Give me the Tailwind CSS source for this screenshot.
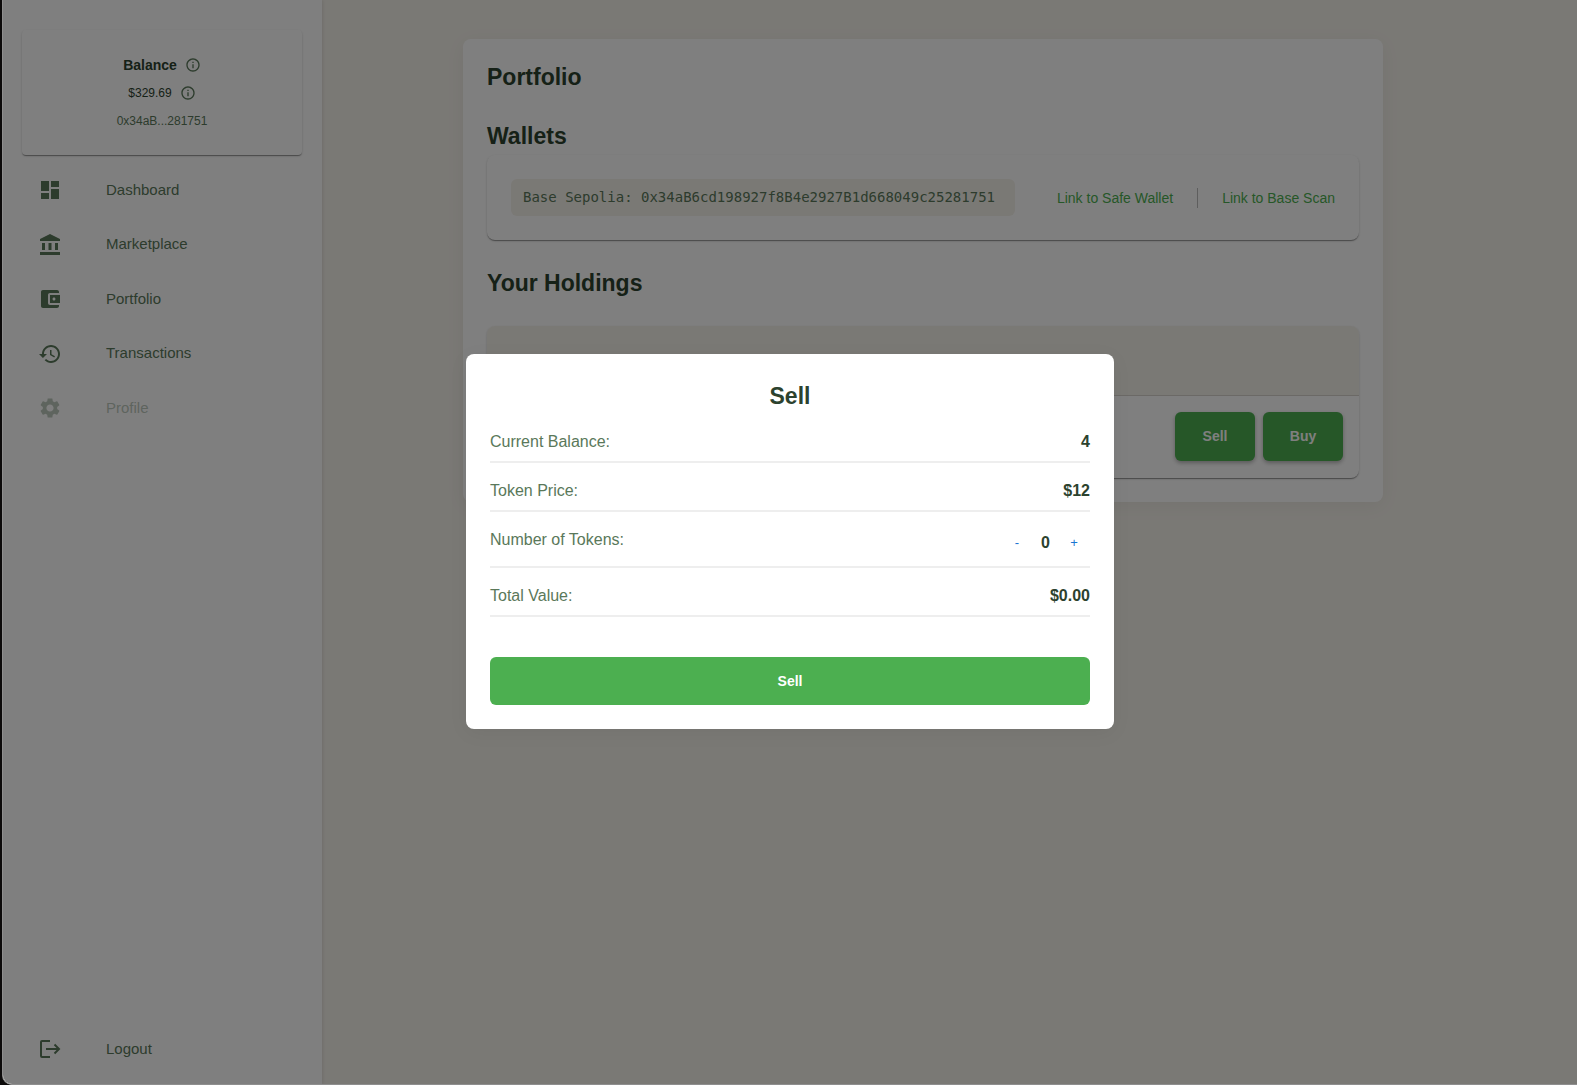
<!DOCTYPE html>
<html lang="en">
<head>
<meta charset="utf-8">
<title>Portfolio</title>
<script src="https://cdn.jsdelivr.net/npm/@tailwindcss/browser@4"></script>
</head>
<body class="min-h-screen bg-[#0c0a0a] pl-[2px] font-['Liberation_Sans',sans-serif] text-[#5a785a]">
<div class="relative flex min-h-screen overflow-hidden rounded-bl-[10px] border-b border-l border-[#8f8f8f] bg-[#f5f2eb]">

  <aside class="flex w-[319px] shrink-0 flex-col bg-white pt-[30px] shadow-[0_0_4px_rgba(0,0,0,0.15)]">
    <section class="mr-5 ml-[19px] flex h-[125px] flex-col items-center gap-2 rounded-[4px] pt-[25px] shadow-[0_2px_1px_-1px_rgba(0,0,0,0.2),0_1px_1px_rgba(0,0,0,0.2),0_1px_3px_rgba(0,0,0,0.12)]">
      <h2 class="flex h-5 items-center gap-2 text-sm font-bold text-[#2c422e]">Balance
        <svg class="size-4 fill-[#5a785a]" viewBox="0 0 24 24"><path d="M11 7h2v2h-2zm0 4h2v6h-2zm1-9C6.480 2 2 6.480 2 12s4.480 10 10 10 10-4.480 10-10S17.520 2 12 2m0 18c-4.410 0-8-3.590-8-8s3.590-8 8-8 8 3.590 8 8-3.590 8-8 8"/></svg>
      </h2>
      <p class="flex h-5 items-center gap-2 text-xs text-[#2c422e]">$329.69
        <svg class="size-4 fill-[#5a785a]" viewBox="0 0 24 24"><path d="M11 7h2v2h-2zm0 4h2v6h-2zm1-9C6.480 2 2 6.480 2 12s4.480 10 10 10 10-4.480 10-10S17.520 2 12 2m0 18c-4.410 0-8-3.590-8-8s3.590-8 8-8 8 3.590 8 8-3.590 8-8 8"/></svg>
      </p>
      <p class="h-5 text-xs leading-5">0x34aB...281751</p>
    </section>
    <nav class="flex grow flex-col pt-2 pb-2 text-[15px]">
      <a href="#" class="flex h-[54px] items-center gap-11 pl-[35px]"><svg class="size-6 fill-[#5a785a]" viewBox="0 0 24 24"><path d="M3 13h8V3H3zm0 8h8v-6H3zm10 0h8V11h-8zm0-18v6h8V3z"/></svg>Dashboard</a>
      <a href="#" class="flex h-[55px] items-center gap-11 pl-[35px]"><svg class="size-6 fill-[#5a785a]" viewBox="0 0 24 24"><path d="M4 10h3v7H4zm6.500 0h3v7h-3zM2 19h20v3H2zm15-9h3v7h-3zm-5-9L2 6v2h20V6z"/></svg>Marketplace</a>
      <a href="#" class="flex h-[54px] items-center gap-11 pl-[35px]"><svg class="size-6 fill-[#5a785a]" viewBox="0 0 24 24"><path d="M21 18v1c0 1.100-.9 2-2 2H5c-1.110 0-2-.9-2-2V5c0-1.100.890-2 2-2h14c1.100 0 2 .9 2 2v1h-9c-1.110 0-2 .9-2 2v8c0 1.100.890 2 2 2zm-9-2h10V8H12zm4-2.500c-.830 0-1.500-.670-1.500-1.500s.670-1.500 1.500-1.500 1.500.670 1.500 1.500-.670 1.500-1.500 1.500"/></svg>Portfolio</a>
      <a href="#" class="flex h-[55px] items-center gap-11 pl-[35px]"><svg class="size-6 fill-[#5a785a]" viewBox="0 0 24 24"><path d="M13 3c-4.970 0-9 4.030-9 9H1l3.890 3.890.070.140L9 12H6c0-3.870 3.130-7 7-7s7 3.130 7 7-3.130 7-7 7c-1.930 0-3.680-.790-4.940-2.060l-1.420 1.420C8.270 19.990 10.510 21 13 21c4.970 0 9-4.030 9-9s-4.030-9-9-9m-1 5v5l4.280 2.540.720-1.210-3.500-2.080V8z"/></svg>Transactions</a>
      <a href="#" aria-disabled="true" class="flex h-[54px] items-center gap-11 pl-[35px] opacity-40"><svg class="size-6 fill-[#5a785a]" viewBox="0 0 24 24"><path d="M19.140 12.940c.040-.3.060-.610.060-.940 0-.320-.020-.640-.070-.940l2.030-1.580c.180-.140.230-.410.120-.610l-1.920-3.320c-.120-.220-.370-.290-.590-.220l-2.390.960c-.5-.380-1.030-.7-1.620-.940l-.360-2.540c-.040-.240-.240-.410-.480-.410h-3.840c-.240 0-.430.170-.470.410l-.360 2.540c-.590.240-1.130.570-1.620.940l-2.390-.960c-.220-.080-.470 0-.590.220L2.740 8.870c-.120.210-.080.470.120.610l2.030 1.580c-.050.3-.090.630-.090.940s.020.640.070.940l-2.030 1.580c-.180.140-.230.410-.120.610l1.920 3.320c.120.220.370.290.590.220l2.390-.960c.5.380 1.030.7 1.620.940l.360 2.540c.050.240.240.410.480.410h3.840c.240 0 .440-.170.470-.410l.360-2.540c.590-.240 1.130-.560 1.620-.940l2.390.960c.220.080.470 0 .590-.220l1.920-3.320c.120-.220.070-.470-.120-.610zM12 15.600c-1.980 0-3.600-1.620-3.600-3.600s1.620-3.600 3.600-3.600 3.600 1.620 3.600 3.600-1.620 3.600-3.600 3.600"/></svg>Profile</a>
      <a href="#" class="mt-auto flex h-[54px] items-center gap-11 pl-[35px]"><svg class="size-6 fill-none stroke-[#5a785a] stroke-2" viewBox="0 0 24 24"><path d="M12 4H4q-1 0-1 1v14q0 1 1 1h8M8 12h13M16.500 7.500 21 12l-4.500 4.500"/></svg>Logout</a>
    </nav>
  </aside>

  <main class="min-w-0 grow pt-[39px] pr-[194px] pb-10 pl-[141px]">
    <div class="rounded-lg bg-white p-6 shadow-[0_4px_20px_rgba(0,0,0,0.05)]">
      <h1 class="text-[23px] leading-7 font-bold text-[#2c422e]">Portfolio</h1>
      <h2 class="mt-[31px] text-[23px] leading-7 font-bold text-[#2c422e]">Wallets</h2>
      <div class="mt-[5px] flex h-[85px] items-center rounded-lg px-6 text-sm shadow-[0_2px_1px_-1px_rgba(0,0,0,0.2),0_1px_1px_rgba(0,0,0,0.2),0_1px_3px_rgba(0,0,0,0.12)]">
        <code class="grow rounded-md bg-[#f5f2eb] px-3 py-2 font-['DejaVu_Sans_Mono',monospace] text-sm leading-[21px] whitespace-nowrap">Base Sepolia: 0x34aB6cd198927f8B4e2927B1d668049c25281751</code>
        <div class="ml-[42px] flex shrink-0 items-center gap-6 text-[#4caf50]">
          <a href="#">Link to Safe Wallet</a>
          <span class="h-5 w-px bg-[#bdbdbd]"></span>
          <a href="#">Link to Base Scan</a>
        </div>
      </div>
      <h2 class="mt-[29px] text-[23px] leading-7 font-bold text-[#2c422e]">Your Holdings</h2>
      <div class="mt-[29px] overflow-hidden rounded-lg shadow-[0_2px_1px_-1px_rgba(0,0,0,0.2),0_1px_1px_rgba(0,0,0,0.2),0_1px_3px_rgba(0,0,0,0.12)]">
        <table class="w-full border-collapse">
          <thead><tr class="h-[69px] border-b border-[#d6d3cc] bg-[#f5f2eb]"><th></th><th></th></tr></thead>
          <tbody><tr>
            <td></td>
            <td class="px-4 pt-4 pb-[17px]">
              <div class="flex justify-end gap-2">
                <button type="button" class="h-[49px] w-20 rounded-md bg-[#4caf50] text-sm font-bold text-white shadow-[0_2px_4px_rgba(0,0,0,0.3)]">Sell</button>
                <button type="button" class="h-[49px] w-20 rounded-md bg-[#4caf50] text-sm font-bold text-white shadow-[0_2px_4px_rgba(0,0,0,0.3)]">Buy</button>
              </div>
            </td>
          </tr></tbody>
        </table>
      </div>
    </div>
  </main>

  <!-- Modal overlay -->
  <div class="absolute inset-0 flex items-center justify-center bg-black/50 pb-px">
    <div role="dialog" aria-labelledby="sell-title" class="w-full max-w-[648px] rounded-lg bg-white p-6 shadow-[0_4px_20px_rgba(0,0,0,0.05)]">
      <h2 id="sell-title" class="h-9 text-center text-[23px] leading-9 font-bold text-[#2c422e]">Sell</h2>
      <dl class="text-base">
        <div class="flex h-[49px] justify-between border-b-2 border-[#eeeeee] pt-4"><dt>Current Balance:</dt><dd class="font-bold text-[#2c422e]">4</dd></div>
        <div class="flex h-[49px] justify-between border-b-2 border-[#eeeeee] pt-4"><dt>Token Price:</dt><dd class="font-bold text-[#2c422e]">$12</dd></div>
        <div class="flex h-14 justify-between border-b-2 border-[#eeeeee] pt-4"><dt>Number of Tokens:</dt>
          <dd class="flex h-[30px] items-center font-bold text-[#2c422e]">
            <button type="button" aria-label="Decrease" class="w-8 text-[13px] font-normal text-[#1976d2]">-</button>
            <span class="w-[25px] text-center">0</span>
            <button type="button" aria-label="Increase" class="w-8 text-[13px] font-normal text-[#1976d2]">+</button>
          </dd>
        </div>
        <div class="flex h-[49px] justify-between border-b-2 border-[#eeeeee] pt-4"><dt>Total Value:</dt><dd class="font-bold text-[#2c422e]">$0.00</dd></div>
      </dl>
      <button type="button" class="mt-10 h-12 w-full rounded-md bg-[#4caf50] text-sm font-bold text-white">Sell</button>
    </div>
  </div>
</div>
</body>
</html>
